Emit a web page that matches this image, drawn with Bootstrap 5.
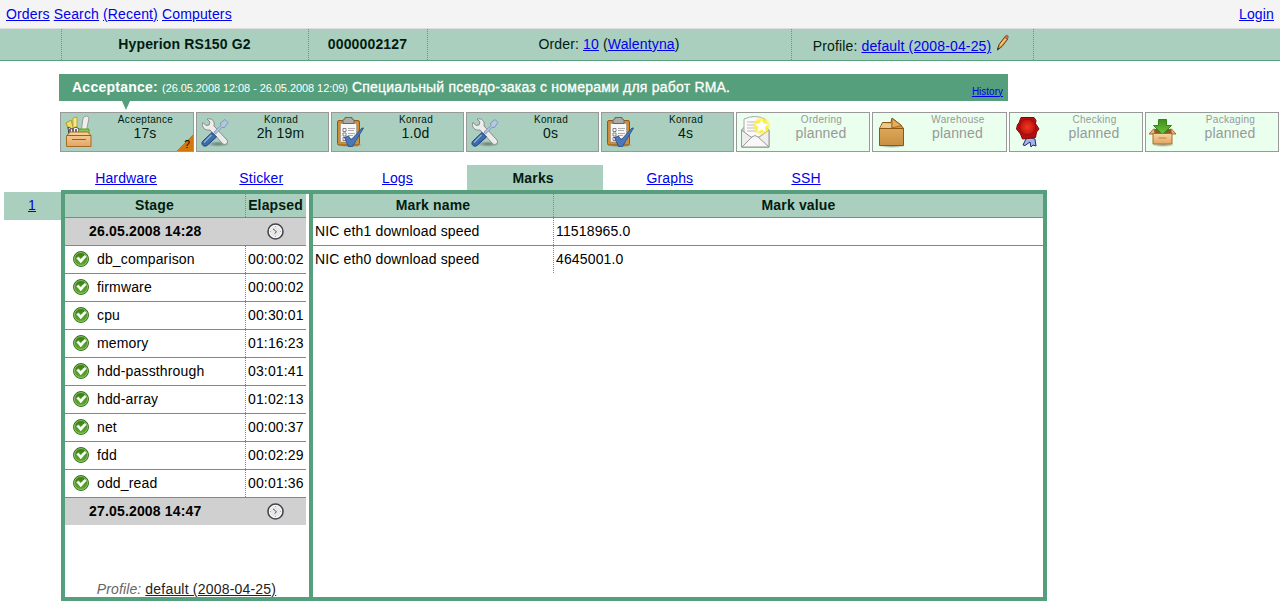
<!DOCTYPE html>
<html lang="en">
<head>
<meta charset="utf-8">
<title>Hyperion RS150 G2</title>
<link href="https://cdn.jsdelivr.net/npm/bootstrap@5.3.0/dist/css/bootstrap.min.css" rel="stylesheet">
<style>
body{font:14px/16px "Liberation Sans",Arial,sans-serif;letter-spacing:.15px;color:#000;background:#fff;height:601px;overflow:hidden}
a{color:#00e;text-decoration:underline}
.topbar{height:29px;line-height:28px;background:#f4f4f4;border-bottom:1px solid #ddd;padding:0 6px}
.info{height:32px;background:#abcfbe;border-bottom:1px solid #56a07d;color:#021c10;display:grid;grid-template-columns:62px 247px 119px 364px 242px 1fr;line-height:31px}
.info>div{text-align:center;border-right:1px dotted #56a07d;padding-right:1px}
.info>div:last-child{border:0}
.profile-name{line-height:27px}
.banner{margin:13px 0 0 59px;width:949px;height:27px;background:#569f7c;color:#fff;padding:0 5px 0 13px}
.banner b{letter-spacing:.25px}
.banner small{font-size:11px;letter-spacing:-.07px}
.banner .msg{-webkit-text-stroke:.3px #fff;letter-spacing:.21px}
.banner a{font-size:10px;letter-spacing:0}
.banner::after{content:"";position:absolute;left:63px;top:27px;border:solid transparent;border-width:9px 4.5px 0;border-top-color:#569f7c}
.steps{margin:11px 0 0 60px;display:grid;grid-template-columns:134px repeat(4,133px) 134px 135px 134px 134px;gap:2px;height:40px}
.step{border:1px solid #999;background:#abcfbe;color:#021c10;text-align:center;overflow:hidden;padding-left:36px}
.step svg{position:absolute;left:3px;top:2px}
.step .who{font-size:10px;line-height:12px;letter-spacing:.3px;margin-top:1px;padding-left:1px}
.step .time{line-height:16px;margin-top:-1px}
.step.plan{background:#eaffee;color:#999}
.flag{position:absolute;right:0;bottom:0;width:16px;height:16px;background:linear-gradient(135deg,transparent 50%,#d4770c 50%);color:#000;font-size:10px;line-height:20px;padding-left:4px}
.tabs{margin:13px 0 0 58px;display:grid;grid-template-columns:repeat(6,136.2px);height:25px;line-height:26px;text-align:center}
.tabs>*{padding-right:2px}
.tabs>:first-child{padding-right:0}
.tabs .on{background:#abcfbe;color:#021c10;font-weight:bold;padding-right:3px}
.side{width:57px;height:28px;background:#abcfbe;margin:2px 0 0 4px;padding-right:1px;text-align:center;line-height:27px}
.panel{width:986px;height:411px;border:4px solid #569f7c}
.left{width:248px;border-right:4px solid #569f7c;padding-right:3px}
.r{display:grid;height:28px;line-height:27px;border-bottom:1px solid #56a07d}
.left .r{grid-template-columns:181px 60px}
.right .r{grid-template-columns:241px 1fr}
.right .r>*{padding-left:2px}
.r>:first-child{border-right:1px dotted #56a07d}
.hd{height:24px;line-height:23px;background:#abcfbe;color:#021c10;font-weight:bold;text-align:center}
.left .hd>*{padding-right:1px}
.right .hd>*{padding-left:0}
.day{background:#d0d0d0;font-weight:bold}
.day>:first-child{border:0;padding-left:24px;letter-spacing:.17px}
.day svg{margin:-1px 2px 0 0}
.day-last{height:27px;border:0}
.stage{display:flex;align-items:center;gap:8px;padding-left:8px}
.stage svg{margin-top:-1px}
.t{padding-left:2px;white-space:nowrap}
.noline{border-bottom-color:transparent}
.prof{color:#666;font-style:italic;padding-left:2px;letter-spacing:.12px}
.prof a{color:#222;font-style:normal;letter-spacing:.2px}
</style>
<script src="https://cdn.jsdelivr.net/npm/bootstrap@5.3.0/dist/js/bootstrap.bundle.min.js"></script>
</head>
<body>
<svg width="0" height="0" class="position-absolute">
<defs>
<linearGradient id="gb" x2="0" y2="1"><stop stop-color="#f7d5a0"/><stop offset="1" stop-color="#e2a562"/></linearGradient>
<linearGradient id="gbr" x2="0" y2="1"><stop stop-color="#dca758"/><stop offset="1" stop-color="#c98f42"/></linearGradient>
<radialGradient id="gr"><stop stop-color="#f03a20"/><stop offset="1" stop-color="#c01010"/></radialGradient>
<radialGradient id="gy"><stop stop-color="#fffb70"/><stop offset=".6" stop-color="#fff03c"/><stop offset="1" stop-color="#fff03c" stop-opacity="0"/></radialGradient>
<linearGradient id="gg" x2="0" y2="1"><stop stop-color="#3f8f1c"/><stop offset="1" stop-color="#6fc63a"/></linearGradient>
<linearGradient id="gok" x2="0" y2="1"><stop stop-color="#347a12"/><stop offset="1" stop-color="#62b02c"/></linearGradient>
<radialGradient id="sh"><stop stop-opacity=".4"/><stop offset="1" stop-opacity="0"/></radialGradient>
<symbol id="tools" viewBox="0 0 32 32"><ellipse cx="18" cy="27" rx="12" ry="3" fill="url(#sh)"/>
<path d="M3 5.500 6 8.500l3-.5L10 5 7 2c5-1 8 2 7 7L27 23c2 3-2 6-4.500 3.500L10 13C5 14 1 10 3 5.500z" fill="#ececec" stroke="#8a8a8a"/>
<path d="m14 15 7-6.500-.5-2.500 4.500-3.500 3 3-3.500 5-2.500-.3-6.500 7z" fill="#b4c8e2" stroke="#6c8cb8" stroke-width=".8"/>
<path d="M12 15.500 16.500 20 7 28.500c-3 2-6.500-1-4.500-4z" fill="#3d6cac" stroke="#1d4279"/><path d="m11.500 18-7.500 7.500" stroke="#8fb2de" stroke-width="1.500"/></symbol>
<symbol id="clip" viewBox="0 0 32 32"><ellipse cx="15" cy="29" rx="13" ry="2.500" fill="url(#sh)"/>
<rect x="2.500" y="4.500" width="22" height="24.500" rx="1.500" fill="#d18b31" stroke="#915811"/><path d="M5.500 7.500h16v18.500h-16z" fill="#f7f7f7" stroke="#999" stroke-width=".7"/>
<path d="M8 7.500V4.500q0-1.500 2-1.500V1.500h7V3q2 0 2 1.500v3z" fill="#aaaca7" stroke="#666"/>
<path d="M8 12.500h3v3H8zM8 17h3v3H8zM8 21.500h3v3H8z" fill="#fff" stroke="#666" stroke-width=".8"/><path d="M13 12.500h7M13 14.500h6M13 17.500h7M13 19.500h5M13 22.500h5" stroke="#999" stroke-width=".8"/>
<path d="m9.500 21.500 4-1.500 2.500 4 11-12h1.500L17.500 30.500h-4z" fill="#4a78bd" stroke="#24497f" stroke-width=".8"/></symbol>
<symbol id="okmark" viewBox="0 0 16 16"><circle cx="8" cy="8" r="7.500" fill="url(#gok)" stroke="#2d6b15" stroke-width=".9"/><circle cx="8" cy="8" r="6.500" fill="none" stroke="#9acb7c" stroke-width=".8"/><path d="m3.700 7.300 1.700-1.300 2.300 2.200 4.100-3.900 1.500 1.400-5.500 6.200z" fill="#fff" stroke="#fff" stroke-width=".5"/></symbol>
<symbol id="clock" viewBox="0 0 17 17"><circle cx="8.500" cy="8.500" r="7.500" fill="#e8e8e8" stroke="#45454d" stroke-width="1.600"/><circle cx="8.500" cy="8.500" r="6" fill="none" stroke="#fff"/><path d="m6 5.800 3.500 3-2 1.900" fill="none" stroke="#555"/><path d="M8.500 3v1M8.500 13v1M3 8.500h1M13 8.500h1" stroke="#aaa"/></symbol>
</defs></svg>

<nav class="topbar d-flex justify-content-between">
 <div><a href="#">Orders</a> <a href="#">Search</a> <a href="#">(Recent)</a> <a href="#">Computers</a></div>
 <a href="#">Login</a>
</nav>
<header class="info">
 <div></div><div class="fw-bold">Hyperion RS150 G2</div><div class="fw-bold">0000002127</div>
 <div>Order: <a href="#">10</a> (<a href="#">Walentyna</a>)</div>
 <div class="d-flex justify-content-center pt-1"><span class="profile-name">Profile: <a href="#">default (2008-04-25)</a></span>
  <svg class="ms-1" width="16" height="18" viewBox="0 0 16 18"><path d="M2.500 17 4 11.500 9.800 4l3 2L7 13.500z" fill="#d79a3e" stroke="#6a4310"/><path d="m5.200 12.500 5.800-7" stroke="#f7cf80" stroke-width="1.200"/><path d="m9.500 4.200 1.500-2q2-.5 2.500 2l-1.300 2z" fill="#e55b4b" stroke="#84625a" stroke-width=".7"/><path d="m2 17.500.5-3 2 1z" fill="#333"/></svg></div>
 <div></div>
</header>

<section class="banner position-relative d-flex justify-content-between align-items-center">
 <div><b>Acceptance:</b> <small>(26.05.2008 12:08 - 26.05.2008 12:09)</small> <span class="msg">Специальный псевдо-заказ с номерами для работ RMA.</span></div>
 <a href="#" class="pt-1 mt-1">History</a>
</section>

<section class="steps">
 <div class="step position-relative"><svg width="32" height="34" viewBox="0 0 32 34"><path d="m2 8 5-3 5 16H7z" fill="#f1dc62" stroke="#b09a27"/><path d="m9 3 4-1v18H9z" fill="#f7eb8d" stroke="#b8a334"/><path d="M19 3q4-4 6 0l-3 15h-5z" fill="#eee" stroke="#999"/><path d="m4 12 4 2 4-2 3 2v7H5z" fill="#fff" stroke="#444"/><path d="M6 14v5M9 14v5M12 14v5" stroke="#4b2c66" stroke-width="1.500"/><path d="M15 14h10v5H14z" fill="#86c64e" stroke="#5d9d2c"/><path d="m2.500 20.500 4-3.500h17l3.500 3.500v11H2.500z" fill="url(#gb)" stroke="#a96a26"/><path d="M3 20.500h24M8 24.500h14" stroke="#9b6020"/></svg>
  <div class="who">Acceptance</div><div class="time">17s</div><span class="flag">?</span></div>
 <div class="step position-relative"><svg width="32" height="32" style="top:4px"><use href="#tools"/></svg><div class="who">Konrad</div><div class="time">2h 19m</div></div>
 <div class="step position-relative"><svg width="32" height="32" style="top:3px"><use href="#clip"/></svg><div class="who">Konrad</div><div class="time">1.0d</div></div>
 <div class="step position-relative"><svg width="32" height="32" style="top:4px"><use href="#tools"/></svg><div class="who">Konrad</div><div class="time">0s</div></div>
 <div class="step position-relative"><svg width="32" height="32" style="top:3px"><use href="#clip"/></svg><div class="who">Konrad</div><div class="time">4s</div></div>
 <div class="step plan position-relative"><svg width="32" height="34" viewBox="0 0 32 34"><path d="M1.500 15 7 9h16l6 6v17H1.500z" fill="#ddd" stroke="#999"/><path d="M4 4q11-5 21 0v18H4z" fill="#fafafa" stroke="#aaa"/><path d="M7 7h12M7 10h12M7 13h13M7 16h12" stroke="#bbb"/><path d="m1.500 15 10 7.500h7l10.500-7.500v17H1.500z" fill="#eee" stroke="#999"/><path d="m2 32 10-10q3-3 6 0l11 10z" fill="#f8f8f8" stroke="#999"/><circle cx="21.500" cy="11" r="9.500" fill="url(#gy)"/><path d="m21.500 4.500 2 4 4.600.5-3.400 3.200 1.100 4.800-4.300-2.400-4.200 2.400 1.100-4.800L15 9l4.500-.5z" fill="#fff"/></svg>
  <div class="who">Ordering</div><div class="time">planned</div></div>
 <div class="step plan position-relative"><svg width="32" height="34" viewBox="0 0 32 34"><ellipse cx="16" cy="31" rx="14" ry="2" fill="url(#sh)"/><path d="M3.500 13.500h24v17h-24z" fill="url(#gbr)" stroke="#8b5711"/><path d="m3.500 13.500 3-6H15l1-4.500 9 7 2.500 3.500z" fill="#d29a4c" stroke="#8b5711"/><path d="m7 8 8 .5V13l-11-.3z" fill="#ecc88e"/><path d="m16 3.500 9.500 7-9.500 2.500z" fill="#e2ae62" stroke="#8b5711" stroke-width=".7"/></svg>
  <div class="who">Warehouse</div><div class="time">planned</div></div>
 <div class="step plan position-relative"><svg width="32" height="34" viewBox="0 0 32 34"><path d="m14 22 8 2 1 7-3-1-2 2-1-5-5 3.500-2-.5z" fill="#a4b4ea" stroke="#252f6e"/><path d="M8 2.500h13l2 3-.5 3L26 14l-2.500 3-1 5.500-8 1-5 .5-2-5L3.500 14l1-4.500L6 8z" fill="#b90f0c" stroke="#760808"/><circle cx="14.500" cy="12" r="8" fill="url(#gr)" stroke="#931010"/></svg>
  <div class="who">Checking</div><div class="time">planned</div></div>
 <div class="step plan position-relative"><svg width="32" height="34" viewBox="0 0 32 34"><ellipse cx="14" cy="30" rx="12" ry="2" fill="url(#sh)"/><path d="M5 14h18v7H5z" fill="#8a5c20"/><path d="M9.500 4.500h8v6h5l-9 9-9-9h5z" fill="url(#gg)" stroke="#388317"/><path d="m5 13.500-5 5.500h5.500M22 13.500l5 5.500h-4" fill="#e9b974" stroke="#a66e2a"/><path d="M4 18.500h19V29H4z" fill="url(#gb)" stroke="#a66e2a"/><path d="M9.500 23h8" stroke="#b98644"/></svg>
  <div class="who">Packaging</div><div class="time">planned</div></div>
</section>

<nav class="tabs">
 <a href="#">Hardware</a><a href="#">Sticker</a><a href="#">Logs</a><span class="on">Marks</span><a href="#">Graphs</a><a href="#">SSH</a>
</nav>

<main class="d-flex">
 <div class="side flex-shrink-0"><a href="#">1</a></div>
 <div class="panel d-flex flex-shrink-0">
  <div class="left d-flex flex-column">
   <div class="r hd"><div>Stage</div><div>Elapsed</div></div>
   <div class="r day"><div>26.05.2008 14:28</div><div class="d-flex justify-content-center align-items-center"><svg width="17" height="17"><use href="#clock"/></svg></div></div>
   <div class="r"><div class="stage"><svg width="16" height="16"><use href="#okmark"/></svg>db_comparison</div><div class="t">00:00:02</div></div>
   <div class="r"><div class="stage"><svg width="16" height="16"><use href="#okmark"/></svg>firmware</div><div class="t">00:00:02</div></div>
   <div class="r"><div class="stage"><svg width="16" height="16"><use href="#okmark"/></svg>cpu</div><div class="t">00:30:01</div></div>
   <div class="r"><div class="stage"><svg width="16" height="16"><use href="#okmark"/></svg>memory</div><div class="t">01:16:23</div></div>
   <div class="r"><div class="stage"><svg width="16" height="16"><use href="#okmark"/></svg>hdd-passthrough</div><div class="t">03:01:41</div></div>
   <div class="r"><div class="stage"><svg width="16" height="16"><use href="#okmark"/></svg>hdd-array</div><div class="t">01:02:13</div></div>
   <div class="r"><div class="stage"><svg width="16" height="16"><use href="#okmark"/></svg>net</div><div class="t">00:00:37</div></div>
   <div class="r"><div class="stage"><svg width="16" height="16"><use href="#okmark"/></svg>fdd</div><div class="t">00:02:29</div></div>
   <div class="r"><div class="stage"><svg width="16" height="16"><use href="#okmark"/></svg>odd_read</div><div class="t">00:01:36</div></div>
   <div class="r day day-last"><div>27.05.2008 14:47</div><div class="d-flex justify-content-center align-items-center"><svg width="17" height="17"><use href="#clock"/></svg></div></div>
   <div class="prof mt-auto text-center">Profile: <a href="#">default (2008-04-25)</a></div>
  </div>
  <div class="right flex-grow-1">
   <div class="r hd"><div>Mark name</div><div>Mark value</div></div>
   <div class="r"><div>NIC eth1 download speed</div><div>11518965.0</div></div>
   <div class="r noline"><div>NIC eth0 download speed</div><div>4645001.0</div></div>
  </div>
 </div>
</main>
</body>
</html>
